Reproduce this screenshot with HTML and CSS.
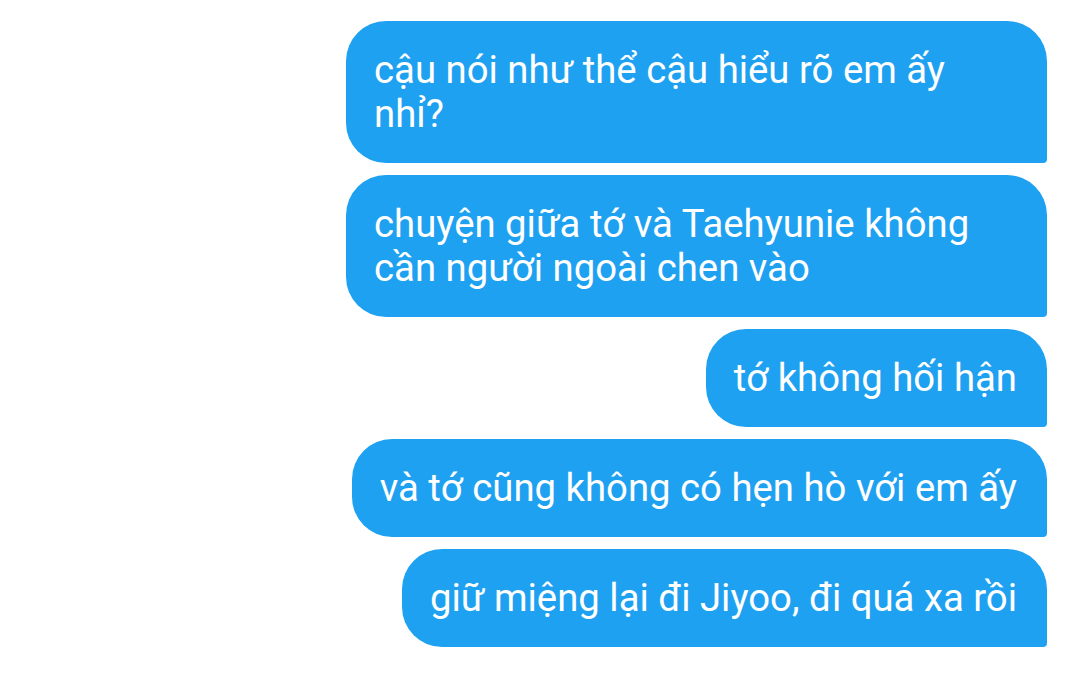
FILE: index.html
```html
<!DOCTYPE html>
<html lang="vi">
<head>
<meta charset="utf-8">
<link rel="stylesheet" href="styles.css">
</head>
<body>
<div class="chat">
  <div class="bubble">cậu nói như thể cậu hiểu rõ em ấy nhỉ?</div>
  <div class="bubble">chuyện giữa tớ và Taehyunie không cần người ngoài chen vào</div>
  <div class="bubble">tớ không hối hận</div>
  <div class="bubble">và tớ cũng không có hẹn hò với em ấy</div>
  <div class="bubble">giữ miệng lại đi Jiyoo, đi quá xa rồi</div>
</div>
</body>
</html>
```
FILE: styles.css
```css
html, body {
  margin: 0;
  padding: 0;
  background: #ffffff;
}
.chat {
  display: flex;
  flex-direction: column;
  align-items: flex-end;
  gap: 12px;
  padding: 21px 33px 0 0;
  font-family: Roboto, "Noto Sans", sans-serif;
}
.bubble {
  box-sizing: border-box;
  max-width: 701px;
  background: #1fa1f1;
  color: #ffffff;
  font-size: 38.3px;
  line-height: 44px;
  padding: 27px 30px 27px 28px;
  border-radius: 40px 40px 4px 40px;
}
```
